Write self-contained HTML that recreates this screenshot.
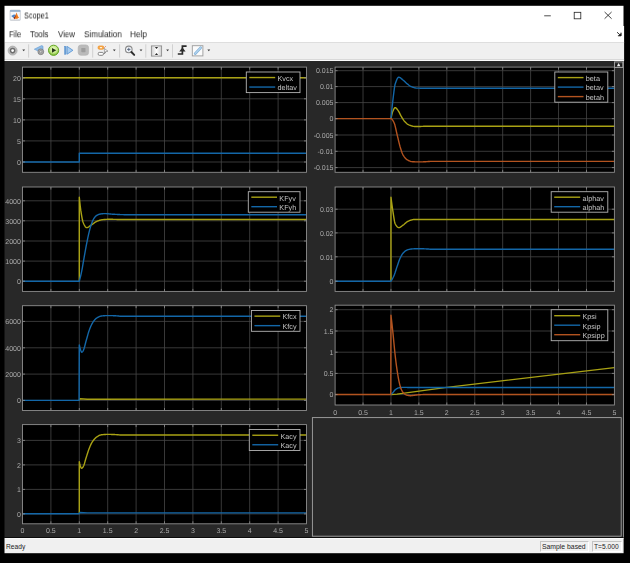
<!DOCTYPE html>
<html lang="en">
<head>
<meta charset="utf-8">
<title>Scope1</title>
<style>
html,body{margin:0;padding:0;background:#000;}
body{width:630px;height:563px;overflow:hidden;position:relative;font-family:"Liberation Sans",Arial,sans-serif;color:#111;}
.abs{position:absolute;}
#titlebar{left:4.5px;top:5.8px;width:619px;height:20.4px;background:#fff;}
#menubar{left:4.5px;top:26px;width:620px;height:16.4px;background:#fff;}
#toolbar{left:4.5px;top:42.4px;width:620px;height:17.4px;background:#f0f0f0;border-top:0.8px solid #d9d9d9;border-bottom:1px solid #fbfbfb;box-sizing:border-box;}
#scope{left:4.5px;top:59.8px;width:619px;height:478.4px;background:#262626;}
#status{left:4.5px;top:538.2px;width:619px;height:15px;background:#f0f0f0;}
.t{position:absolute;white-space:nowrap;transform-origin:0 50%;line-height:1;}
#title{left:24px;top:12px;font-size:9px;will-change:transform;color:#222;}
.menu{top:30px;font-size:8.4px;will-change:transform;color:#1e1e1e;}
.st{top:543.5px;font-size:6.8px;color:#1c1c1c;}
.sbox{position:absolute;top:541px;height:11px;border-left:0.8px solid #c4c4c4;border-top:0.8px solid #c4c4c4;border-right:0.8px solid #fff;border-bottom:0.8px solid #fff;box-sizing:border-box;}
svg.plots{position:absolute;left:0;top:0;will-change:transform;text-rendering:geometricPrecision;}
svg.ui{position:absolute;left:0;top:0;}
</style>
</head>
<body>
<svg class="ui" width="630" height="563" viewBox="0 0 630 563">
<rect x="4.5" y="5.8" width="619" height="20.2" fill="#fff"/>
<rect x="4.5" y="26" width="619.6" height="16" fill="#fff"/>
<rect x="4.5" y="42" width="619.6" height="17.6" fill="#f0f0f0"/>
<rect x="5" y="42" width="619.1" height="0.8" fill="#dadada"/>
<rect x="5" y="59" width="619.1" height="0.6" fill="#e2e2e2"/>
<rect x="4.5" y="59.6" width="619.6" height="1.4" fill="#fdfdfd"/>
<rect x="4.5" y="61" width="619.1" height="477" fill="#282828"/>
<rect x="623" y="61" width="1" height="477" fill="#8a8a8a"/>
<rect x="4.5" y="537" width="619.1" height="1" fill="#0c0c0c"/>
<rect x="4.5" y="538" width="619.1" height="15.2" fill="#f0f0f0"/>
<rect x="5" y="538" width="618.6" height="0.6" fill="#fff"/>
</svg>

<span class="t" id="title" style="transform:translateY(-0.5px) scaleX(0.810)">Scope1</span>
<span class="t menu" style="left:8.8px;transform:translateY(0.2px) scaleX(0.908)" id="m1">File</span>
<span class="t menu" style="left:30.2px;transform:translateY(0.2px) scaleX(0.948)" id="m2">Tools</span>
<span class="t menu" style="left:57.9px;transform:translateY(0.2px) scaleX(0.942)" id="m3">View</span>
<span class="t menu" style="left:84px;transform:translateY(0.2px) scaleX(0.964)" id="m4">Simulation</span>
<span class="t menu" style="left:130.2px;transform:translateY(0.2px) scaleX(0.985)" id="m5">Help</span>

<span class="t st" style="left:5.7px;transform:scaleX(0.977)" id="s1">Ready</span>
<div class="sbox" style="left:540.4px;width:49px"></div>
<div class="sbox" style="left:591.6px;width:30.4px"></div>
<span class="t st" style="left:542.4px;transform:scaleX(1.005)" id="s2">Sample based</span>
<span class="t st" style="left:594px;transform:scaleX(0.978)" id="s3">T=5.000</span>

<svg class="plots" width="630" height="563" viewBox="0 0 630 563" font-family="Liberation Sans, Arial, sans-serif" font-size="7.0">
<rect x="22.5" y="67.1" width="284" height="105.2" fill="#000"/>
<line x1="50.9" y1="67.1" x2="50.9" y2="172.3" stroke="#464646" stroke-width="0.8"/>
<line x1="79.3" y1="67.1" x2="79.3" y2="172.3" stroke="#464646" stroke-width="0.8"/>
<line x1="107.7" y1="67.1" x2="107.7" y2="172.3" stroke="#464646" stroke-width="0.8"/>
<line x1="136.1" y1="67.1" x2="136.1" y2="172.3" stroke="#464646" stroke-width="0.8"/>
<line x1="164.5" y1="67.1" x2="164.5" y2="172.3" stroke="#464646" stroke-width="0.8"/>
<line x1="192.9" y1="67.1" x2="192.9" y2="172.3" stroke="#464646" stroke-width="0.8"/>
<line x1="221.3" y1="67.1" x2="221.3" y2="172.3" stroke="#464646" stroke-width="0.8"/>
<line x1="249.7" y1="67.1" x2="249.7" y2="172.3" stroke="#464646" stroke-width="0.8"/>
<line x1="278.1" y1="67.1" x2="278.1" y2="172.3" stroke="#464646" stroke-width="0.8"/>
<line x1="22.5" y1="77.8" x2="306.5" y2="77.8" stroke="#464646" stroke-width="0.8"/>
<line x1="22.5" y1="98.8" x2="306.5" y2="98.8" stroke="#464646" stroke-width="0.8"/>
<line x1="22.5" y1="119.9" x2="306.5" y2="119.9" stroke="#464646" stroke-width="0.8"/>
<line x1="22.5" y1="140.9" x2="306.5" y2="140.9" stroke="#464646" stroke-width="0.8"/>
<line x1="22.5" y1="162" x2="306.5" y2="162" stroke="#464646" stroke-width="0.8"/>
<polyline points="22.5,77.8 306.5,77.8" fill="none" stroke="#a9a214" stroke-width="1.4" stroke-linejoin="round"/>
<polyline points="22.5,162 79.3,162 79.3,153.18 306.5,153.18" fill="none" stroke="#1367a8" stroke-width="1.4" stroke-linejoin="round"/>
<rect x="22.5" y="67.1" width="284" height="105.2" fill="none" stroke="#8e8e8e" stroke-width="0.9"/>
<line x1="50.9" y1="172.3" x2="50.9" y2="169.8" stroke="#8e8e8e" stroke-width="0.8"/>
<line x1="50.9" y1="67.1" x2="50.9" y2="69.6" stroke="#8e8e8e" stroke-width="0.8"/>
<line x1="79.3" y1="172.3" x2="79.3" y2="169.8" stroke="#8e8e8e" stroke-width="0.8"/>
<line x1="79.3" y1="67.1" x2="79.3" y2="69.6" stroke="#8e8e8e" stroke-width="0.8"/>
<line x1="107.7" y1="172.3" x2="107.7" y2="169.8" stroke="#8e8e8e" stroke-width="0.8"/>
<line x1="107.7" y1="67.1" x2="107.7" y2="69.6" stroke="#8e8e8e" stroke-width="0.8"/>
<line x1="136.1" y1="172.3" x2="136.1" y2="169.8" stroke="#8e8e8e" stroke-width="0.8"/>
<line x1="136.1" y1="67.1" x2="136.1" y2="69.6" stroke="#8e8e8e" stroke-width="0.8"/>
<line x1="164.5" y1="172.3" x2="164.5" y2="169.8" stroke="#8e8e8e" stroke-width="0.8"/>
<line x1="164.5" y1="67.1" x2="164.5" y2="69.6" stroke="#8e8e8e" stroke-width="0.8"/>
<line x1="192.9" y1="172.3" x2="192.9" y2="169.8" stroke="#8e8e8e" stroke-width="0.8"/>
<line x1="192.9" y1="67.1" x2="192.9" y2="69.6" stroke="#8e8e8e" stroke-width="0.8"/>
<line x1="221.3" y1="172.3" x2="221.3" y2="169.8" stroke="#8e8e8e" stroke-width="0.8"/>
<line x1="221.3" y1="67.1" x2="221.3" y2="69.6" stroke="#8e8e8e" stroke-width="0.8"/>
<line x1="249.7" y1="172.3" x2="249.7" y2="169.8" stroke="#8e8e8e" stroke-width="0.8"/>
<line x1="249.7" y1="67.1" x2="249.7" y2="69.6" stroke="#8e8e8e" stroke-width="0.8"/>
<line x1="278.1" y1="172.3" x2="278.1" y2="169.8" stroke="#8e8e8e" stroke-width="0.8"/>
<line x1="278.1" y1="67.1" x2="278.1" y2="69.6" stroke="#8e8e8e" stroke-width="0.8"/>
<line x1="22.5" y1="77.8" x2="25" y2="77.8" stroke="#8e8e8e" stroke-width="0.8"/>
<line x1="306.5" y1="77.8" x2="304" y2="77.8" stroke="#8e8e8e" stroke-width="0.8"/>
<text x="20.9" y="80.5" text-anchor="end" fill="#aaaaaa">20</text>
<line x1="22.5" y1="98.8" x2="25" y2="98.8" stroke="#8e8e8e" stroke-width="0.8"/>
<line x1="306.5" y1="98.8" x2="304" y2="98.8" stroke="#8e8e8e" stroke-width="0.8"/>
<text x="20.9" y="101.5" text-anchor="end" fill="#aaaaaa">15</text>
<line x1="22.5" y1="119.9" x2="25" y2="119.9" stroke="#8e8e8e" stroke-width="0.8"/>
<line x1="306.5" y1="119.9" x2="304" y2="119.9" stroke="#8e8e8e" stroke-width="0.8"/>
<text x="20.9" y="122.6" text-anchor="end" fill="#aaaaaa">10</text>
<line x1="22.5" y1="140.9" x2="25" y2="140.9" stroke="#8e8e8e" stroke-width="0.8"/>
<line x1="306.5" y1="140.9" x2="304" y2="140.9" stroke="#8e8e8e" stroke-width="0.8"/>
<text x="20.9" y="143.6" text-anchor="end" fill="#aaaaaa">5</text>
<line x1="22.5" y1="162" x2="25" y2="162" stroke="#8e8e8e" stroke-width="0.8"/>
<line x1="306.5" y1="162" x2="304" y2="162" stroke="#8e8e8e" stroke-width="0.8"/>
<text x="20.9" y="164.7" text-anchor="end" fill="#aaaaaa">0</text>
<rect x="246.3" y="72" width="53.7" height="20.6" fill="#000" stroke="#b4b4b4" stroke-width="0.9"/>
<line x1="249.3" y1="77.55" x2="275.2" y2="77.55" stroke="#a9a214" stroke-width="1.4"/>
<text x="277.5" y="80.85" fill="#c4c4c4" font-size="7.25">Kvcx</text>
<line x1="249.3" y1="87.05" x2="275.2" y2="87.05" stroke="#1367a8" stroke-width="1.4"/>
<text x="277.5" y="90.35" fill="#c4c4c4" font-size="7.25">deltav</text>
<rect x="335.1" y="67.1" width="279.3" height="105.2" fill="#000"/>
<line x1="363.03" y1="67.1" x2="363.03" y2="172.3" stroke="#464646" stroke-width="0.8"/>
<line x1="390.96" y1="67.1" x2="390.96" y2="172.3" stroke="#464646" stroke-width="0.8"/>
<line x1="418.89" y1="67.1" x2="418.89" y2="172.3" stroke="#464646" stroke-width="0.8"/>
<line x1="446.82" y1="67.1" x2="446.82" y2="172.3" stroke="#464646" stroke-width="0.8"/>
<line x1="474.75" y1="67.1" x2="474.75" y2="172.3" stroke="#464646" stroke-width="0.8"/>
<line x1="502.68" y1="67.1" x2="502.68" y2="172.3" stroke="#464646" stroke-width="0.8"/>
<line x1="530.61" y1="67.1" x2="530.61" y2="172.3" stroke="#464646" stroke-width="0.8"/>
<line x1="558.54" y1="67.1" x2="558.54" y2="172.3" stroke="#464646" stroke-width="0.8"/>
<line x1="586.47" y1="67.1" x2="586.47" y2="172.3" stroke="#464646" stroke-width="0.8"/>
<line x1="335.1" y1="70.7" x2="614.4" y2="70.7" stroke="#464646" stroke-width="0.8"/>
<line x1="335.1" y1="86.6" x2="614.4" y2="86.6" stroke="#464646" stroke-width="0.8"/>
<line x1="335.1" y1="102.6" x2="614.4" y2="102.6" stroke="#464646" stroke-width="0.8"/>
<line x1="335.1" y1="118.7" x2="614.4" y2="118.7" stroke="#464646" stroke-width="0.8"/>
<line x1="335.1" y1="135" x2="614.4" y2="135" stroke="#464646" stroke-width="0.8"/>
<line x1="335.1" y1="151.3" x2="614.4" y2="151.3" stroke="#464646" stroke-width="0.8"/>
<line x1="335.1" y1="167.6" x2="614.4" y2="167.6" stroke="#464646" stroke-width="0.8"/>
<polyline points="390.96,118.7 390.96,118.7 391.46,116.28 391.96,114.12 392.46,112.36 392.96,111.06 393.46,109.86 393.96,108.8 394.46,108.01 394.96,107.62 395.46,107.67 395.96,107.96 396.46,108.43 396.96,109.03 397.46,109.69 397.96,110.38 398.46,111.07 398.96,111.91 399.46,112.88 399.96,113.91 400.46,114.94 400.96,115.89 401.46,116.73 401.96,117.55 402.46,118.36 402.96,119.15 403.46,119.91 403.96,120.62 404.46,121.27 404.96,121.85 405.46,122.35 405.96,122.82 406.46,123.27 406.96,123.69 407.46,124.07 407.96,124.41 408.46,124.71 408.96,124.96 409.46,125.16 409.96,125.34 410.46,125.51 410.96,125.67 411.46,125.83 411.96,125.97 412.46,126.1 412.96,126.22 413.46,126.32 413.96,126.4 414.46,126.45 414.96,126.49 415.46,126.5 415.96,126.5 416.46,126.5 416.96,126.5 417.46,126.5 417.96,126.49 418.46,126.49 418.96,126.48 419.46,126.48 419.96,126.47 420.46,126.46 420.96,126.44 421.46,126.42 421.96,126.4 422.46,126.38 422.96,126.35 423.46,126.32 423.96,126.29 424.46,126.25 424.96,126.2 425,126.2 614.4,126.2" fill="none" stroke="#a9a214" stroke-width="1.4" stroke-linejoin="round"/>
<polyline points="390.96,118.7 390.96,118.7 391.46,113.5 391.96,108.58 392.46,103.96 392.96,99.65 393.46,95.5 393.96,91.3 394.46,87.55 394.96,84.81 395.46,83.17 395.96,81.7 396.46,80.38 396.96,79.25 397.46,78.33 397.96,77.66 398.46,77.28 398.96,77.21 399.46,77.32 399.96,77.54 400.46,77.86 400.96,78.24 401.46,78.67 401.96,79.12 402.46,79.58 402.96,80.01 403.46,80.41 403.96,80.84 404.46,81.3 404.96,81.77 405.46,82.25 405.96,82.73 406.46,83.19 406.96,83.63 407.46,84.03 407.96,84.42 408.46,84.82 408.96,85.22 409.46,85.59 409.96,85.94 410.46,86.25 410.96,86.51 411.46,86.72 411.96,86.9 412.46,87.08 412.96,87.25 413.46,87.42 413.96,87.57 414.46,87.71 414.96,87.83 415.46,87.94 415.96,88.03 416.46,88.09 416.96,88.13 417.46,88.15 417.96,88.16 418.46,88.16 418.96,88.17 419.46,88.17 419.96,88.18 420.46,88.18 420.96,88.19 421.46,88.19 421.96,88.19 422.46,88.19 422.96,88.2 423.46,88.2 423.96,88.2 424.46,88.2 424.96,88.2 425,88.2 614.4,88.2" fill="none" stroke="#1367a8" stroke-width="1.4" stroke-linejoin="round"/>
<polyline points="335.1,118.6 390.96,118.6 390.96,118.6 391.46,118.76 391.96,119.19 392.46,119.82 392.96,120.62 393.46,121.54 393.96,122.52 394.46,123.67 394.96,125.31 395.46,127.31 395.96,129.52 396.46,131.81 396.96,134.01 397.46,136.05 397.96,138.16 398.46,140.31 398.96,142.42 399.46,144.44 399.96,146.29 400.46,147.94 400.96,149.53 401.46,151.05 401.96,152.46 402.46,153.72 402.96,154.78 403.46,155.62 403.96,156.39 404.46,157.1 404.96,157.76 405.46,158.35 405.96,158.87 406.46,159.32 406.96,159.69 407.46,159.99 407.96,160.25 408.46,160.5 408.96,160.74 409.46,160.95 409.96,161.15 410.46,161.32 410.96,161.46 411.46,161.57 411.96,161.65 412.46,161.7 412.96,161.74 413.46,161.77 413.96,161.8 414.46,161.82 414.96,161.85 415.46,161.87 415.96,161.88 416.46,161.89 416.96,161.9 417.46,161.9 417.96,161.9 418.46,161.9 418.96,161.9 419.46,161.89 419.96,161.89 420.46,161.88 420.96,161.87 421.46,161.86 421.96,161.85 422.46,161.84 422.96,161.83 423.46,161.81 423.96,161.79 424.46,161.77 424.96,161.75 425.46,161.73 425.96,161.7 426.46,161.67 426.96,161.64 427.46,161.61 427.96,161.57 428.46,161.54 428.96,161.49 429.46,161.45 429.96,161.4 430,161.4 614.4,161.4" fill="none" stroke="#b3531f" stroke-width="1.4" stroke-linejoin="round"/>
<rect x="335.1" y="67.1" width="279.3" height="105.2" fill="none" stroke="#8e8e8e" stroke-width="0.9"/>
<line x1="363.03" y1="172.3" x2="363.03" y2="169.8" stroke="#8e8e8e" stroke-width="0.8"/>
<line x1="363.03" y1="67.1" x2="363.03" y2="69.6" stroke="#8e8e8e" stroke-width="0.8"/>
<line x1="390.96" y1="172.3" x2="390.96" y2="169.8" stroke="#8e8e8e" stroke-width="0.8"/>
<line x1="390.96" y1="67.1" x2="390.96" y2="69.6" stroke="#8e8e8e" stroke-width="0.8"/>
<line x1="418.89" y1="172.3" x2="418.89" y2="169.8" stroke="#8e8e8e" stroke-width="0.8"/>
<line x1="418.89" y1="67.1" x2="418.89" y2="69.6" stroke="#8e8e8e" stroke-width="0.8"/>
<line x1="446.82" y1="172.3" x2="446.82" y2="169.8" stroke="#8e8e8e" stroke-width="0.8"/>
<line x1="446.82" y1="67.1" x2="446.82" y2="69.6" stroke="#8e8e8e" stroke-width="0.8"/>
<line x1="474.75" y1="172.3" x2="474.75" y2="169.8" stroke="#8e8e8e" stroke-width="0.8"/>
<line x1="474.75" y1="67.1" x2="474.75" y2="69.6" stroke="#8e8e8e" stroke-width="0.8"/>
<line x1="502.68" y1="172.3" x2="502.68" y2="169.8" stroke="#8e8e8e" stroke-width="0.8"/>
<line x1="502.68" y1="67.1" x2="502.68" y2="69.6" stroke="#8e8e8e" stroke-width="0.8"/>
<line x1="530.61" y1="172.3" x2="530.61" y2="169.8" stroke="#8e8e8e" stroke-width="0.8"/>
<line x1="530.61" y1="67.1" x2="530.61" y2="69.6" stroke="#8e8e8e" stroke-width="0.8"/>
<line x1="558.54" y1="172.3" x2="558.54" y2="169.8" stroke="#8e8e8e" stroke-width="0.8"/>
<line x1="558.54" y1="67.1" x2="558.54" y2="69.6" stroke="#8e8e8e" stroke-width="0.8"/>
<line x1="586.47" y1="172.3" x2="586.47" y2="169.8" stroke="#8e8e8e" stroke-width="0.8"/>
<line x1="586.47" y1="67.1" x2="586.47" y2="69.6" stroke="#8e8e8e" stroke-width="0.8"/>
<line x1="335.1" y1="70.7" x2="337.6" y2="70.7" stroke="#8e8e8e" stroke-width="0.8"/>
<line x1="614.4" y1="70.7" x2="611.9" y2="70.7" stroke="#8e8e8e" stroke-width="0.8"/>
<text x="333.5" y="73.4" text-anchor="end" fill="#aaaaaa">0.015</text>
<line x1="335.1" y1="86.6" x2="337.6" y2="86.6" stroke="#8e8e8e" stroke-width="0.8"/>
<line x1="614.4" y1="86.6" x2="611.9" y2="86.6" stroke="#8e8e8e" stroke-width="0.8"/>
<text x="333.5" y="89.3" text-anchor="end" fill="#aaaaaa">0.01</text>
<line x1="335.1" y1="102.6" x2="337.6" y2="102.6" stroke="#8e8e8e" stroke-width="0.8"/>
<line x1="614.4" y1="102.6" x2="611.9" y2="102.6" stroke="#8e8e8e" stroke-width="0.8"/>
<text x="333.5" y="105.3" text-anchor="end" fill="#aaaaaa">0.005</text>
<line x1="335.1" y1="118.7" x2="337.6" y2="118.7" stroke="#8e8e8e" stroke-width="0.8"/>
<line x1="614.4" y1="118.7" x2="611.9" y2="118.7" stroke="#8e8e8e" stroke-width="0.8"/>
<text x="333.5" y="121.4" text-anchor="end" fill="#aaaaaa">0</text>
<line x1="335.1" y1="135" x2="337.6" y2="135" stroke="#8e8e8e" stroke-width="0.8"/>
<line x1="614.4" y1="135" x2="611.9" y2="135" stroke="#8e8e8e" stroke-width="0.8"/>
<text x="333.5" y="137.7" text-anchor="end" fill="#aaaaaa">-0.005</text>
<line x1="335.1" y1="151.3" x2="337.6" y2="151.3" stroke="#8e8e8e" stroke-width="0.8"/>
<line x1="614.4" y1="151.3" x2="611.9" y2="151.3" stroke="#8e8e8e" stroke-width="0.8"/>
<text x="333.5" y="154" text-anchor="end" fill="#aaaaaa">-0.01</text>
<line x1="335.1" y1="167.6" x2="337.6" y2="167.6" stroke="#8e8e8e" stroke-width="0.8"/>
<line x1="614.4" y1="167.6" x2="611.9" y2="167.6" stroke="#8e8e8e" stroke-width="0.8"/>
<text x="333.5" y="170.3" text-anchor="end" fill="#aaaaaa">-0.015</text>
<rect x="554.8" y="72" width="53" height="30.2" fill="#000" stroke="#b4b4b4" stroke-width="0.9"/>
<line x1="557.8" y1="77.6" x2="583.5" y2="77.6" stroke="#a9a214" stroke-width="1.4"/>
<text x="585.8" y="80.9" fill="#c4c4c4" font-size="7.25">beta</text>
<line x1="557.8" y1="87.1" x2="583.5" y2="87.1" stroke="#1367a8" stroke-width="1.4"/>
<text x="585.8" y="90.4" fill="#c4c4c4" font-size="7.25">betav</text>
<line x1="557.8" y1="96.6" x2="583.5" y2="96.6" stroke="#b3531f" stroke-width="1.4"/>
<text x="585.8" y="99.9" fill="#c4c4c4" font-size="7.25">betah</text>
<rect x="22.5" y="187" width="284" height="104.4" fill="#000"/>
<line x1="50.9" y1="187" x2="50.9" y2="291.4" stroke="#464646" stroke-width="0.8"/>
<line x1="79.3" y1="187" x2="79.3" y2="291.4" stroke="#464646" stroke-width="0.8"/>
<line x1="107.7" y1="187" x2="107.7" y2="291.4" stroke="#464646" stroke-width="0.8"/>
<line x1="136.1" y1="187" x2="136.1" y2="291.4" stroke="#464646" stroke-width="0.8"/>
<line x1="164.5" y1="187" x2="164.5" y2="291.4" stroke="#464646" stroke-width="0.8"/>
<line x1="192.9" y1="187" x2="192.9" y2="291.4" stroke="#464646" stroke-width="0.8"/>
<line x1="221.3" y1="187" x2="221.3" y2="291.4" stroke="#464646" stroke-width="0.8"/>
<line x1="249.7" y1="187" x2="249.7" y2="291.4" stroke="#464646" stroke-width="0.8"/>
<line x1="278.1" y1="187" x2="278.1" y2="291.4" stroke="#464646" stroke-width="0.8"/>
<line x1="22.5" y1="200.8" x2="306.5" y2="200.8" stroke="#464646" stroke-width="0.8"/>
<line x1="22.5" y1="220.8" x2="306.5" y2="220.8" stroke="#464646" stroke-width="0.8"/>
<line x1="22.5" y1="241" x2="306.5" y2="241" stroke="#464646" stroke-width="0.8"/>
<line x1="22.5" y1="261.1" x2="306.5" y2="261.1" stroke="#464646" stroke-width="0.8"/>
<line x1="22.5" y1="281.2" x2="306.5" y2="281.2" stroke="#464646" stroke-width="0.8"/>
<polyline points="79.3,281.2 79.3,197.2 79.3,197.2 79.8,202.08 80.3,206.52 80.8,210.4 81.3,213.64 81.8,216.61 82.3,219.26 82.8,221.4 83.3,222.83 83.8,223.97 84.3,225.02 84.8,225.94 85.3,226.69 85.8,227.24 86.3,227.55 86.8,227.59 87.3,227.5 87.8,227.32 88.3,227.06 88.8,226.76 89.3,226.41 89.8,226.05 90.3,225.68 90.8,225.33 91.3,225 91.8,224.68 92.3,224.33 92.8,223.95 93.3,223.57 93.8,223.19 94.3,222.82 94.8,222.46 95.3,222.13 95.8,221.84 96.3,221.6 96.8,221.39 97.3,221.18 97.8,220.97 98.3,220.78 98.8,220.59 99.3,220.42 99.8,220.26 100.3,220.11 100.8,219.98 101.3,219.87 101.8,219.78 102.3,219.71 102.8,219.66 103.3,219.61 103.8,219.56 104.3,219.51 104.8,219.47 105.3,219.43 105.8,219.39 106.3,219.36 106.8,219.34 107.3,219.32 107.8,219.31 108.3,219.3 108.8,219.3 109.3,219.3 109.8,219.3 110.3,219.3 110.8,219.3 111.3,219.31 111.8,219.31 112.3,219.31 112.8,219.32 113.3,219.33 113.8,219.33 114.3,219.35 114.8,219.36 115.3,219.37 115.8,219.39 116.3,219.41 116.8,219.43 117.3,219.46 117.8,219.49 118,219.5 306.5,219.5" fill="none" stroke="#a9a214" stroke-width="1.4" stroke-linejoin="round"/>
<polyline points="22.5,281.2 79.3,281.2 79.3,281.2 79.8,279.4 80.3,277.44 80.8,275.33 81.3,273.08 81.8,270.71 82.3,268.08 82.8,265.22 83.3,262.24 83.8,259.28 84.3,256.44 84.8,253.64 85.3,250.84 85.8,248.06 86.3,245.35 86.8,242.76 87.3,240.32 87.8,237.96 88.3,235.64 88.8,233.41 89.3,231.31 89.8,229.36 90.3,227.6 90.8,225.97 91.3,224.42 91.8,222.96 92.3,221.63 92.8,220.47 93.3,219.5 93.8,218.66 94.3,217.89 94.8,217.19 95.3,216.59 95.8,216.08 96.3,215.7 96.8,215.39 97.3,215.11 97.8,214.85 98.3,214.62 98.8,214.42 99.3,214.26 99.8,214.12 100.3,214.02 100.8,213.94 101.3,213.86 101.8,213.8 102.3,213.74 102.8,213.68 103.3,213.64 103.8,213.62 104.3,213.6 104.8,213.6 105.3,213.61 105.8,213.63 106.3,213.66 106.8,213.69 107.3,213.73 107.8,213.77 108.3,213.82 108.8,213.87 109.3,213.92 109.8,213.97 110.3,214.02 110.8,214.07 111.3,214.11 111.8,214.15 112.3,214.18 112.8,214.21 113.3,214.24 113.8,214.26 114.3,214.29 114.8,214.32 115.3,214.34 115.8,214.37 116.3,214.4 116.8,214.42 117.3,214.45 117.8,214.47 118.3,214.49 118.8,214.52 119.3,214.54 119.8,214.56 120.3,214.58 120.8,214.6 121.3,214.61 121.8,214.63 122.3,214.65 122.8,214.66 123.3,214.67 123.8,214.68 124.3,214.69 124.8,214.7 125.3,214.71 125.8,214.72 126.3,214.72 126.8,214.73 127.3,214.74 127.8,214.75 128.3,214.75 128.8,214.76 129.3,214.76 129.8,214.77 130.3,214.77 130.8,214.78 131.3,214.78 131.8,214.79 132.3,214.79 132.8,214.79 133.3,214.8 133.8,214.8 134.3,214.8 134.8,214.8 135,214.8 306.5,214.8" fill="none" stroke="#1367a8" stroke-width="1.4" stroke-linejoin="round"/>
<rect x="22.5" y="187" width="284" height="104.4" fill="none" stroke="#8e8e8e" stroke-width="0.9"/>
<line x1="50.9" y1="291.4" x2="50.9" y2="288.9" stroke="#8e8e8e" stroke-width="0.8"/>
<line x1="50.9" y1="187" x2="50.9" y2="189.5" stroke="#8e8e8e" stroke-width="0.8"/>
<line x1="79.3" y1="291.4" x2="79.3" y2="288.9" stroke="#8e8e8e" stroke-width="0.8"/>
<line x1="79.3" y1="187" x2="79.3" y2="189.5" stroke="#8e8e8e" stroke-width="0.8"/>
<line x1="107.7" y1="291.4" x2="107.7" y2="288.9" stroke="#8e8e8e" stroke-width="0.8"/>
<line x1="107.7" y1="187" x2="107.7" y2="189.5" stroke="#8e8e8e" stroke-width="0.8"/>
<line x1="136.1" y1="291.4" x2="136.1" y2="288.9" stroke="#8e8e8e" stroke-width="0.8"/>
<line x1="136.1" y1="187" x2="136.1" y2="189.5" stroke="#8e8e8e" stroke-width="0.8"/>
<line x1="164.5" y1="291.4" x2="164.5" y2="288.9" stroke="#8e8e8e" stroke-width="0.8"/>
<line x1="164.5" y1="187" x2="164.5" y2="189.5" stroke="#8e8e8e" stroke-width="0.8"/>
<line x1="192.9" y1="291.4" x2="192.9" y2="288.9" stroke="#8e8e8e" stroke-width="0.8"/>
<line x1="192.9" y1="187" x2="192.9" y2="189.5" stroke="#8e8e8e" stroke-width="0.8"/>
<line x1="221.3" y1="291.4" x2="221.3" y2="288.9" stroke="#8e8e8e" stroke-width="0.8"/>
<line x1="221.3" y1="187" x2="221.3" y2="189.5" stroke="#8e8e8e" stroke-width="0.8"/>
<line x1="249.7" y1="291.4" x2="249.7" y2="288.9" stroke="#8e8e8e" stroke-width="0.8"/>
<line x1="249.7" y1="187" x2="249.7" y2="189.5" stroke="#8e8e8e" stroke-width="0.8"/>
<line x1="278.1" y1="291.4" x2="278.1" y2="288.9" stroke="#8e8e8e" stroke-width="0.8"/>
<line x1="278.1" y1="187" x2="278.1" y2="189.5" stroke="#8e8e8e" stroke-width="0.8"/>
<line x1="22.5" y1="200.8" x2="25" y2="200.8" stroke="#8e8e8e" stroke-width="0.8"/>
<line x1="306.5" y1="200.8" x2="304" y2="200.8" stroke="#8e8e8e" stroke-width="0.8"/>
<text x="20.9" y="203.5" text-anchor="end" fill="#aaaaaa">4000</text>
<line x1="22.5" y1="220.8" x2="25" y2="220.8" stroke="#8e8e8e" stroke-width="0.8"/>
<line x1="306.5" y1="220.8" x2="304" y2="220.8" stroke="#8e8e8e" stroke-width="0.8"/>
<text x="20.9" y="223.5" text-anchor="end" fill="#aaaaaa">3000</text>
<line x1="22.5" y1="241" x2="25" y2="241" stroke="#8e8e8e" stroke-width="0.8"/>
<line x1="306.5" y1="241" x2="304" y2="241" stroke="#8e8e8e" stroke-width="0.8"/>
<text x="20.9" y="243.7" text-anchor="end" fill="#aaaaaa">2000</text>
<line x1="22.5" y1="261.1" x2="25" y2="261.1" stroke="#8e8e8e" stroke-width="0.8"/>
<line x1="306.5" y1="261.1" x2="304" y2="261.1" stroke="#8e8e8e" stroke-width="0.8"/>
<text x="20.9" y="263.8" text-anchor="end" fill="#aaaaaa">1000</text>
<line x1="22.5" y1="281.2" x2="25" y2="281.2" stroke="#8e8e8e" stroke-width="0.8"/>
<line x1="306.5" y1="281.2" x2="304" y2="281.2" stroke="#8e8e8e" stroke-width="0.8"/>
<text x="20.9" y="283.9" text-anchor="end" fill="#aaaaaa">0</text>
<rect x="248.3" y="191.7" width="51.7" height="20.5" fill="#000" stroke="#b4b4b4" stroke-width="0.9"/>
<line x1="251.3" y1="197.2" x2="277" y2="197.2" stroke="#a9a214" stroke-width="1.4"/>
<text x="279.3" y="200.5" fill="#c4c4c4" font-size="7.25">KFyv</text>
<line x1="251.3" y1="206.7" x2="277" y2="206.7" stroke="#1367a8" stroke-width="1.4"/>
<text x="279.3" y="210" fill="#c4c4c4" font-size="7.25">KFyh</text>
<rect x="335.1" y="187" width="279.3" height="104.4" fill="#000"/>
<line x1="363.03" y1="187" x2="363.03" y2="291.4" stroke="#464646" stroke-width="0.8"/>
<line x1="390.96" y1="187" x2="390.96" y2="291.4" stroke="#464646" stroke-width="0.8"/>
<line x1="418.89" y1="187" x2="418.89" y2="291.4" stroke="#464646" stroke-width="0.8"/>
<line x1="446.82" y1="187" x2="446.82" y2="291.4" stroke="#464646" stroke-width="0.8"/>
<line x1="474.75" y1="187" x2="474.75" y2="291.4" stroke="#464646" stroke-width="0.8"/>
<line x1="502.68" y1="187" x2="502.68" y2="291.4" stroke="#464646" stroke-width="0.8"/>
<line x1="530.61" y1="187" x2="530.61" y2="291.4" stroke="#464646" stroke-width="0.8"/>
<line x1="558.54" y1="187" x2="558.54" y2="291.4" stroke="#464646" stroke-width="0.8"/>
<line x1="586.47" y1="187" x2="586.47" y2="291.4" stroke="#464646" stroke-width="0.8"/>
<line x1="335.1" y1="209.2" x2="614.4" y2="209.2" stroke="#464646" stroke-width="0.8"/>
<line x1="335.1" y1="232.9" x2="614.4" y2="232.9" stroke="#464646" stroke-width="0.8"/>
<line x1="335.1" y1="256.8" x2="614.4" y2="256.8" stroke="#464646" stroke-width="0.8"/>
<line x1="335.1" y1="281.2" x2="614.4" y2="281.2" stroke="#464646" stroke-width="0.8"/>
<polyline points="390.96,281.2 390.96,197.2 390.96,197.2 391.46,201.06 391.96,204.73 392.46,208.23 392.96,211.52 393.46,214.77 393.96,218.17 394.46,221.19 394.96,223.26 395.46,224.28 395.96,225.13 396.46,225.88 396.96,226.51 397.46,227.01 397.96,227.36 398.46,227.56 398.96,227.59 399.46,227.5 399.96,227.3 400.46,227.03 400.96,226.69 401.46,226.32 401.96,225.93 402.46,225.54 402.96,225.16 403.46,224.82 403.96,224.44 404.46,224.02 404.96,223.58 405.46,223.14 405.96,222.7 406.46,222.27 406.96,221.88 407.46,221.54 407.96,221.25 408.46,221.04 408.96,220.84 409.46,220.65 409.96,220.46 410.46,220.28 410.96,220.12 411.46,219.97 411.96,219.83 412.46,219.72 412.96,219.62 413.46,219.55 413.96,219.51 414.46,219.5 414.96,219.5 415.46,219.5 415.96,219.5 416.46,219.5 416.96,219.5 417.46,219.5 417.96,219.5 418.46,219.5 418.96,219.5 419.46,219.5 419.96,219.5 420.46,219.5 420.96,219.5 421.46,219.5 421.96,219.5 422.46,219.5 422.96,219.5 423.46,219.5 423.96,219.5 424.46,219.5 424.96,219.5 425,219.5 614.4,219.5" fill="none" stroke="#a9a214" stroke-width="1.4" stroke-linejoin="round"/>
<polyline points="335.1,281.2 390.96,281.2 390.96,281.2 391.46,280.48 391.96,279.66 392.46,278.75 392.96,277.77 393.46,276.73 393.96,275.62 394.46,274.42 394.96,273.05 395.46,271.55 395.96,269.98 396.46,268.41 396.96,266.89 397.46,265.45 397.96,263.99 398.46,262.51 398.96,261.08 399.46,259.73 399.96,258.52 400.46,257.47 400.96,256.48 401.46,255.54 401.96,254.69 402.46,253.92 402.96,253.27 403.46,252.73 403.96,252.22 404.46,251.75 404.96,251.31 405.46,250.91 405.96,250.56 406.46,250.26 406.96,250.02 407.46,249.85 407.96,249.7 408.46,249.56 408.96,249.43 409.46,249.32 409.96,249.22 410.46,249.13 410.96,249.05 411.46,248.99 411.96,248.93 412.46,248.9 412.96,248.86 413.46,248.83 413.96,248.8 414.46,248.78 414.96,248.76 415.46,248.74 415.96,248.72 416.46,248.71 416.96,248.7 417.46,248.7 417.96,248.7 418.46,248.7 418.96,248.7 419.46,248.71 419.96,248.71 420.46,248.72 420.96,248.73 421.46,248.74 421.96,248.75 422.46,248.76 422.96,248.77 423.46,248.79 423.96,248.81 424.46,248.83 424.96,248.85 425.46,248.87 425.96,248.9 426.46,248.93 426.96,248.96 427.46,248.99 427.96,249.03 428.46,249.06 428.96,249.11 429.46,249.15 429.96,249.2 430,249.2 614.4,249.2" fill="none" stroke="#1367a8" stroke-width="1.4" stroke-linejoin="round"/>
<rect x="335.1" y="187" width="279.3" height="104.4" fill="none" stroke="#8e8e8e" stroke-width="0.9"/>
<line x1="363.03" y1="291.4" x2="363.03" y2="288.9" stroke="#8e8e8e" stroke-width="0.8"/>
<line x1="363.03" y1="187" x2="363.03" y2="189.5" stroke="#8e8e8e" stroke-width="0.8"/>
<line x1="390.96" y1="291.4" x2="390.96" y2="288.9" stroke="#8e8e8e" stroke-width="0.8"/>
<line x1="390.96" y1="187" x2="390.96" y2="189.5" stroke="#8e8e8e" stroke-width="0.8"/>
<line x1="418.89" y1="291.4" x2="418.89" y2="288.9" stroke="#8e8e8e" stroke-width="0.8"/>
<line x1="418.89" y1="187" x2="418.89" y2="189.5" stroke="#8e8e8e" stroke-width="0.8"/>
<line x1="446.82" y1="291.4" x2="446.82" y2="288.9" stroke="#8e8e8e" stroke-width="0.8"/>
<line x1="446.82" y1="187" x2="446.82" y2="189.5" stroke="#8e8e8e" stroke-width="0.8"/>
<line x1="474.75" y1="291.4" x2="474.75" y2="288.9" stroke="#8e8e8e" stroke-width="0.8"/>
<line x1="474.75" y1="187" x2="474.75" y2="189.5" stroke="#8e8e8e" stroke-width="0.8"/>
<line x1="502.68" y1="291.4" x2="502.68" y2="288.9" stroke="#8e8e8e" stroke-width="0.8"/>
<line x1="502.68" y1="187" x2="502.68" y2="189.5" stroke="#8e8e8e" stroke-width="0.8"/>
<line x1="530.61" y1="291.4" x2="530.61" y2="288.9" stroke="#8e8e8e" stroke-width="0.8"/>
<line x1="530.61" y1="187" x2="530.61" y2="189.5" stroke="#8e8e8e" stroke-width="0.8"/>
<line x1="558.54" y1="291.4" x2="558.54" y2="288.9" stroke="#8e8e8e" stroke-width="0.8"/>
<line x1="558.54" y1="187" x2="558.54" y2="189.5" stroke="#8e8e8e" stroke-width="0.8"/>
<line x1="586.47" y1="291.4" x2="586.47" y2="288.9" stroke="#8e8e8e" stroke-width="0.8"/>
<line x1="586.47" y1="187" x2="586.47" y2="189.5" stroke="#8e8e8e" stroke-width="0.8"/>
<line x1="335.1" y1="209.2" x2="337.6" y2="209.2" stroke="#8e8e8e" stroke-width="0.8"/>
<line x1="614.4" y1="209.2" x2="611.9" y2="209.2" stroke="#8e8e8e" stroke-width="0.8"/>
<text x="333.5" y="211.9" text-anchor="end" fill="#aaaaaa">0.03</text>
<line x1="335.1" y1="232.9" x2="337.6" y2="232.9" stroke="#8e8e8e" stroke-width="0.8"/>
<line x1="614.4" y1="232.9" x2="611.9" y2="232.9" stroke="#8e8e8e" stroke-width="0.8"/>
<text x="333.5" y="235.6" text-anchor="end" fill="#aaaaaa">0.02</text>
<line x1="335.1" y1="256.8" x2="337.6" y2="256.8" stroke="#8e8e8e" stroke-width="0.8"/>
<line x1="614.4" y1="256.8" x2="611.9" y2="256.8" stroke="#8e8e8e" stroke-width="0.8"/>
<text x="333.5" y="259.5" text-anchor="end" fill="#aaaaaa">0.01</text>
<line x1="335.1" y1="281.2" x2="337.6" y2="281.2" stroke="#8e8e8e" stroke-width="0.8"/>
<line x1="614.4" y1="281.2" x2="611.9" y2="281.2" stroke="#8e8e8e" stroke-width="0.8"/>
<text x="333.5" y="283.9" text-anchor="end" fill="#aaaaaa">0</text>
<rect x="551.2" y="191.7" width="56.6" height="20.5" fill="#000" stroke="#b4b4b4" stroke-width="0.9"/>
<line x1="554.2" y1="197.2" x2="580.2" y2="197.2" stroke="#a9a214" stroke-width="1.4"/>
<text x="582.5" y="200.5" fill="#c4c4c4" font-size="7.25">alphav</text>
<line x1="554.2" y1="206.7" x2="580.2" y2="206.7" stroke="#1367a8" stroke-width="1.4"/>
<text x="582.5" y="210" fill="#c4c4c4" font-size="7.25">alphah</text>
<rect x="22.5" y="305.7" width="284" height="104.8" fill="#000"/>
<line x1="50.9" y1="305.7" x2="50.9" y2="410.5" stroke="#464646" stroke-width="0.8"/>
<line x1="79.3" y1="305.7" x2="79.3" y2="410.5" stroke="#464646" stroke-width="0.8"/>
<line x1="107.7" y1="305.7" x2="107.7" y2="410.5" stroke="#464646" stroke-width="0.8"/>
<line x1="136.1" y1="305.7" x2="136.1" y2="410.5" stroke="#464646" stroke-width="0.8"/>
<line x1="164.5" y1="305.7" x2="164.5" y2="410.5" stroke="#464646" stroke-width="0.8"/>
<line x1="192.9" y1="305.7" x2="192.9" y2="410.5" stroke="#464646" stroke-width="0.8"/>
<line x1="221.3" y1="305.7" x2="221.3" y2="410.5" stroke="#464646" stroke-width="0.8"/>
<line x1="249.7" y1="305.7" x2="249.7" y2="410.5" stroke="#464646" stroke-width="0.8"/>
<line x1="278.1" y1="305.7" x2="278.1" y2="410.5" stroke="#464646" stroke-width="0.8"/>
<line x1="22.5" y1="321.4" x2="306.5" y2="321.4" stroke="#464646" stroke-width="0.8"/>
<line x1="22.5" y1="347.8" x2="306.5" y2="347.8" stroke="#464646" stroke-width="0.8"/>
<line x1="22.5" y1="374.1" x2="306.5" y2="374.1" stroke="#464646" stroke-width="0.8"/>
<line x1="22.5" y1="400.4" x2="306.5" y2="400.4" stroke="#464646" stroke-width="0.8"/>
<polyline points="79.3,400.2 79.8,398.8 87.3,399.3 306.5,399.1" fill="none" stroke="#a9a214" stroke-width="1.4" stroke-linejoin="round"/>
<polyline points="22.5,400.4 79.1,400.4 79.3,345 79.3,345 79.8,347.24 80.3,349.1 80.8,350.58 81.3,351.87 81.8,352.29 82.3,351.96 82.8,351.31 83.3,350.53 83.8,349.39 84.3,347.81 84.8,345.96 85.3,343.98 85.8,342.04 86.3,340.26 86.8,338.5 87.3,336.7 87.8,334.9 88.3,333.17 88.8,331.56 89.3,330.13 89.8,328.79 90.3,327.51 90.8,326.31 91.3,325.19 91.8,324.19 92.3,323.3 92.8,322.5 93.3,321.72 93.8,321 94.3,320.32 94.8,319.7 95.3,319.15 95.8,318.68 96.3,318.3 96.8,317.97 97.3,317.65 97.8,317.35 98.3,317.07 98.8,316.82 99.3,316.59 99.8,316.39 100.3,316.23 100.8,316.1 101.3,316.01 101.8,315.95 102.3,315.9 102.8,315.85 103.3,315.8 103.8,315.76 104.3,315.72 104.8,315.69 105.3,315.66 105.8,315.64 106.3,315.62 106.8,315.61 107.3,315.6 107.8,315.6 108.3,315.6 108.8,315.6 109.3,315.61 109.8,315.61 110.3,315.62 110.8,315.62 111.3,315.63 111.8,315.64 112.3,315.66 112.8,315.67 113.3,315.69 113.8,315.71 114.3,315.73 114.8,315.75 115.3,315.78 115.8,315.81 116.3,315.85 116.8,315.88 117.3,315.92 117.8,315.97 118.3,316.01 118.8,316.06 119.3,316.12 119.8,316.18 120,316.2 306.5,316.2" fill="none" stroke="#1367a8" stroke-width="1.4" stroke-linejoin="round"/>
<rect x="22.5" y="305.7" width="284" height="104.8" fill="none" stroke="#8e8e8e" stroke-width="0.9"/>
<line x1="50.9" y1="410.5" x2="50.9" y2="408" stroke="#8e8e8e" stroke-width="0.8"/>
<line x1="50.9" y1="305.7" x2="50.9" y2="308.2" stroke="#8e8e8e" stroke-width="0.8"/>
<line x1="79.3" y1="410.5" x2="79.3" y2="408" stroke="#8e8e8e" stroke-width="0.8"/>
<line x1="79.3" y1="305.7" x2="79.3" y2="308.2" stroke="#8e8e8e" stroke-width="0.8"/>
<line x1="107.7" y1="410.5" x2="107.7" y2="408" stroke="#8e8e8e" stroke-width="0.8"/>
<line x1="107.7" y1="305.7" x2="107.7" y2="308.2" stroke="#8e8e8e" stroke-width="0.8"/>
<line x1="136.1" y1="410.5" x2="136.1" y2="408" stroke="#8e8e8e" stroke-width="0.8"/>
<line x1="136.1" y1="305.7" x2="136.1" y2="308.2" stroke="#8e8e8e" stroke-width="0.8"/>
<line x1="164.5" y1="410.5" x2="164.5" y2="408" stroke="#8e8e8e" stroke-width="0.8"/>
<line x1="164.5" y1="305.7" x2="164.5" y2="308.2" stroke="#8e8e8e" stroke-width="0.8"/>
<line x1="192.9" y1="410.5" x2="192.9" y2="408" stroke="#8e8e8e" stroke-width="0.8"/>
<line x1="192.9" y1="305.7" x2="192.9" y2="308.2" stroke="#8e8e8e" stroke-width="0.8"/>
<line x1="221.3" y1="410.5" x2="221.3" y2="408" stroke="#8e8e8e" stroke-width="0.8"/>
<line x1="221.3" y1="305.7" x2="221.3" y2="308.2" stroke="#8e8e8e" stroke-width="0.8"/>
<line x1="249.7" y1="410.5" x2="249.7" y2="408" stroke="#8e8e8e" stroke-width="0.8"/>
<line x1="249.7" y1="305.7" x2="249.7" y2="308.2" stroke="#8e8e8e" stroke-width="0.8"/>
<line x1="278.1" y1="410.5" x2="278.1" y2="408" stroke="#8e8e8e" stroke-width="0.8"/>
<line x1="278.1" y1="305.7" x2="278.1" y2="308.2" stroke="#8e8e8e" stroke-width="0.8"/>
<line x1="22.5" y1="321.4" x2="25" y2="321.4" stroke="#8e8e8e" stroke-width="0.8"/>
<line x1="306.5" y1="321.4" x2="304" y2="321.4" stroke="#8e8e8e" stroke-width="0.8"/>
<text x="20.9" y="324.1" text-anchor="end" fill="#aaaaaa">6000</text>
<line x1="22.5" y1="347.8" x2="25" y2="347.8" stroke="#8e8e8e" stroke-width="0.8"/>
<line x1="306.5" y1="347.8" x2="304" y2="347.8" stroke="#8e8e8e" stroke-width="0.8"/>
<text x="20.9" y="350.5" text-anchor="end" fill="#aaaaaa">4000</text>
<line x1="22.5" y1="374.1" x2="25" y2="374.1" stroke="#8e8e8e" stroke-width="0.8"/>
<line x1="306.5" y1="374.1" x2="304" y2="374.1" stroke="#8e8e8e" stroke-width="0.8"/>
<text x="20.9" y="376.8" text-anchor="end" fill="#aaaaaa">2000</text>
<line x1="22.5" y1="400.4" x2="25" y2="400.4" stroke="#8e8e8e" stroke-width="0.8"/>
<line x1="306.5" y1="400.4" x2="304" y2="400.4" stroke="#8e8e8e" stroke-width="0.8"/>
<text x="20.9" y="403.1" text-anchor="end" fill="#aaaaaa">0</text>
<rect x="251.4" y="310.5" width="48.6" height="20.8" fill="#000" stroke="#b4b4b4" stroke-width="0.9"/>
<line x1="254.4" y1="316.15" x2="280.2" y2="316.15" stroke="#a9a214" stroke-width="1.4"/>
<text x="282.5" y="319.45" fill="#c4c4c4" font-size="7.25">Kfcx</text>
<line x1="254.4" y1="325.65" x2="280.2" y2="325.65" stroke="#1367a8" stroke-width="1.4"/>
<text x="282.5" y="328.95" fill="#c4c4c4" font-size="7.25">Kfcy</text>
<rect x="335.1" y="305.2" width="279.3" height="99.8" fill="#000"/>
<line x1="363.03" y1="305.2" x2="363.03" y2="405" stroke="#464646" stroke-width="0.8"/>
<line x1="390.96" y1="305.2" x2="390.96" y2="405" stroke="#464646" stroke-width="0.8"/>
<line x1="418.89" y1="305.2" x2="418.89" y2="405" stroke="#464646" stroke-width="0.8"/>
<line x1="446.82" y1="305.2" x2="446.82" y2="405" stroke="#464646" stroke-width="0.8"/>
<line x1="474.75" y1="305.2" x2="474.75" y2="405" stroke="#464646" stroke-width="0.8"/>
<line x1="502.68" y1="305.2" x2="502.68" y2="405" stroke="#464646" stroke-width="0.8"/>
<line x1="530.61" y1="305.2" x2="530.61" y2="405" stroke="#464646" stroke-width="0.8"/>
<line x1="558.54" y1="305.2" x2="558.54" y2="405" stroke="#464646" stroke-width="0.8"/>
<line x1="586.47" y1="305.2" x2="586.47" y2="405" stroke="#464646" stroke-width="0.8"/>
<line x1="335.1" y1="309.7" x2="614.4" y2="309.7" stroke="#464646" stroke-width="0.8"/>
<line x1="335.1" y1="331" x2="614.4" y2="331" stroke="#464646" stroke-width="0.8"/>
<line x1="335.1" y1="352.2" x2="614.4" y2="352.2" stroke="#464646" stroke-width="0.8"/>
<line x1="335.1" y1="373.4" x2="614.4" y2="373.4" stroke="#464646" stroke-width="0.8"/>
<line x1="335.1" y1="394.6" x2="614.4" y2="394.6" stroke="#464646" stroke-width="0.8"/>
<polyline points="390.96,394.5 397,394.1 444.8,387.6 614.4,367.6" fill="none" stroke="#a9a214" stroke-width="1.4" stroke-linejoin="round"/>
<polyline points="390.96,394.5 390.96,394.5 391.46,394.02 391.96,393.52 392.46,393 392.96,392.45 393.46,391.87 393.96,391.22 394.46,390.57 394.96,390.02 395.46,389.6 395.96,389.21 396.46,388.85 396.96,388.53 397.46,388.27 397.96,388.07 398.46,387.94 398.96,387.82 399.46,387.71 399.96,387.62 400.46,387.54 400.96,387.47 401.46,387.43 401.96,387.4 402.46,387.4 402.96,387.4 403.46,387.4 403.96,387.4 404.46,387.4 404.96,387.4 405.46,387.41 405.96,387.41 406.46,387.42 406.96,387.42 407.46,387.43 407.96,387.44 408.46,387.45 408.96,387.47 409.46,387.48 409.96,387.5 410,387.5 614.4,387.5" fill="none" stroke="#1367a8" stroke-width="1.4" stroke-linejoin="round"/>
<polyline points="335.1,394.5 390.76,394.5 390.96,315.2 390.96,315.2 391.46,319.49 391.96,323.92 392.46,328.48 392.96,333.17 393.46,338.08 393.96,343.35 394.46,348.63 394.96,353.54 395.46,357.9 395.96,362.01 396.46,365.85 396.96,369.41 397.46,372.67 397.96,375.74 398.46,378.59 398.96,381.12 399.46,383.31 399.96,385.34 400.46,387.16 400.96,388.64 401.46,389.74 401.96,390.69 402.46,391.53 402.96,392.26 403.46,392.89 403.96,393.41 404.46,393.82 404.96,394.19 405.46,394.51 405.96,394.8 406.46,395.03 406.96,395.21 407.46,395.33 407.96,395.43 408.46,395.52 408.96,395.6 409.46,395.65 409.96,395.69 410.46,395.7 410.96,395.69 411.46,395.66 411.96,395.62 412.46,395.56 412.96,395.5 413.46,395.43 413.96,395.35 414.46,395.28 414.96,395.2 415.46,395.12 415.96,395.05 416.46,394.99 416.96,394.94 417.46,394.9 417.96,394.86 418.46,394.82 418.96,394.79 419.46,394.76 419.96,394.72 420.46,394.69 420.96,394.66 421.46,394.64 421.96,394.61 422.46,394.59 422.96,394.56 423.46,394.54 423.96,394.53 424.46,394.51 424.96,394.5 425,394.5 614.4,394.5" fill="none" stroke="#b3531f" stroke-width="1.4" stroke-linejoin="round"/>
<rect x="335.1" y="305.2" width="279.3" height="99.8" fill="none" stroke="#8e8e8e" stroke-width="0.9"/>
<line x1="363.03" y1="405" x2="363.03" y2="402.5" stroke="#8e8e8e" stroke-width="0.8"/>
<line x1="363.03" y1="305.2" x2="363.03" y2="307.7" stroke="#8e8e8e" stroke-width="0.8"/>
<line x1="390.96" y1="405" x2="390.96" y2="402.5" stroke="#8e8e8e" stroke-width="0.8"/>
<line x1="390.96" y1="305.2" x2="390.96" y2="307.7" stroke="#8e8e8e" stroke-width="0.8"/>
<line x1="418.89" y1="405" x2="418.89" y2="402.5" stroke="#8e8e8e" stroke-width="0.8"/>
<line x1="418.89" y1="305.2" x2="418.89" y2="307.7" stroke="#8e8e8e" stroke-width="0.8"/>
<line x1="446.82" y1="405" x2="446.82" y2="402.5" stroke="#8e8e8e" stroke-width="0.8"/>
<line x1="446.82" y1="305.2" x2="446.82" y2="307.7" stroke="#8e8e8e" stroke-width="0.8"/>
<line x1="474.75" y1="405" x2="474.75" y2="402.5" stroke="#8e8e8e" stroke-width="0.8"/>
<line x1="474.75" y1="305.2" x2="474.75" y2="307.7" stroke="#8e8e8e" stroke-width="0.8"/>
<line x1="502.68" y1="405" x2="502.68" y2="402.5" stroke="#8e8e8e" stroke-width="0.8"/>
<line x1="502.68" y1="305.2" x2="502.68" y2="307.7" stroke="#8e8e8e" stroke-width="0.8"/>
<line x1="530.61" y1="405" x2="530.61" y2="402.5" stroke="#8e8e8e" stroke-width="0.8"/>
<line x1="530.61" y1="305.2" x2="530.61" y2="307.7" stroke="#8e8e8e" stroke-width="0.8"/>
<line x1="558.54" y1="405" x2="558.54" y2="402.5" stroke="#8e8e8e" stroke-width="0.8"/>
<line x1="558.54" y1="305.2" x2="558.54" y2="307.7" stroke="#8e8e8e" stroke-width="0.8"/>
<line x1="586.47" y1="405" x2="586.47" y2="402.5" stroke="#8e8e8e" stroke-width="0.8"/>
<line x1="586.47" y1="305.2" x2="586.47" y2="307.7" stroke="#8e8e8e" stroke-width="0.8"/>
<line x1="335.1" y1="309.7" x2="337.6" y2="309.7" stroke="#8e8e8e" stroke-width="0.8"/>
<line x1="614.4" y1="309.7" x2="611.9" y2="309.7" stroke="#8e8e8e" stroke-width="0.8"/>
<text x="333.5" y="312.4" text-anchor="end" fill="#aaaaaa">2</text>
<line x1="335.1" y1="331" x2="337.6" y2="331" stroke="#8e8e8e" stroke-width="0.8"/>
<line x1="614.4" y1="331" x2="611.9" y2="331" stroke="#8e8e8e" stroke-width="0.8"/>
<text x="333.5" y="333.7" text-anchor="end" fill="#aaaaaa">1.5</text>
<line x1="335.1" y1="352.2" x2="337.6" y2="352.2" stroke="#8e8e8e" stroke-width="0.8"/>
<line x1="614.4" y1="352.2" x2="611.9" y2="352.2" stroke="#8e8e8e" stroke-width="0.8"/>
<text x="333.5" y="354.9" text-anchor="end" fill="#aaaaaa">1</text>
<line x1="335.1" y1="373.4" x2="337.6" y2="373.4" stroke="#8e8e8e" stroke-width="0.8"/>
<line x1="614.4" y1="373.4" x2="611.9" y2="373.4" stroke="#8e8e8e" stroke-width="0.8"/>
<text x="333.5" y="376.1" text-anchor="end" fill="#aaaaaa">0.5</text>
<line x1="335.1" y1="394.6" x2="337.6" y2="394.6" stroke="#8e8e8e" stroke-width="0.8"/>
<line x1="614.4" y1="394.6" x2="611.9" y2="394.6" stroke="#8e8e8e" stroke-width="0.8"/>
<text x="333.5" y="397.3" text-anchor="end" fill="#aaaaaa">0</text>
<text x="335.1" y="414.5" text-anchor="middle" fill="#aaaaaa">0</text>
<text x="363.03" y="414.5" text-anchor="middle" fill="#aaaaaa">0.5</text>
<text x="390.96" y="414.5" text-anchor="middle" fill="#aaaaaa">1</text>
<text x="418.89" y="414.5" text-anchor="middle" fill="#aaaaaa">1.5</text>
<text x="446.82" y="414.5" text-anchor="middle" fill="#aaaaaa">2</text>
<text x="474.75" y="414.5" text-anchor="middle" fill="#aaaaaa">2.5</text>
<text x="502.68" y="414.5" text-anchor="middle" fill="#aaaaaa">3</text>
<text x="530.61" y="414.5" text-anchor="middle" fill="#aaaaaa">3.5</text>
<text x="558.54" y="414.5" text-anchor="middle" fill="#aaaaaa">4</text>
<text x="586.47" y="414.5" text-anchor="middle" fill="#aaaaaa">4.5</text>
<text x="614.4" y="414.5" text-anchor="middle" fill="#aaaaaa">5</text>
<rect x="551.2" y="309.7" width="56.6" height="31" fill="#000" stroke="#b4b4b4" stroke-width="0.9"/>
<line x1="554.2" y1="315.7" x2="580.2" y2="315.7" stroke="#a9a214" stroke-width="1.4"/>
<text x="582.5" y="319" fill="#c4c4c4" font-size="7.25">Kpsi</text>
<line x1="554.2" y1="325.2" x2="580.2" y2="325.2" stroke="#1367a8" stroke-width="1.4"/>
<text x="582.5" y="328.5" fill="#c4c4c4" font-size="7.25">Kpsip</text>
<line x1="554.2" y1="334.7" x2="580.2" y2="334.7" stroke="#b3531f" stroke-width="1.4"/>
<text x="582.5" y="338" fill="#c4c4c4" font-size="7.25">Kpsipp</text>
<rect x="22.5" y="424.6" width="284" height="99.2" fill="#000"/>
<line x1="50.9" y1="424.6" x2="50.9" y2="523.8" stroke="#464646" stroke-width="0.8"/>
<line x1="79.3" y1="424.6" x2="79.3" y2="523.8" stroke="#464646" stroke-width="0.8"/>
<line x1="107.7" y1="424.6" x2="107.7" y2="523.8" stroke="#464646" stroke-width="0.8"/>
<line x1="136.1" y1="424.6" x2="136.1" y2="523.8" stroke="#464646" stroke-width="0.8"/>
<line x1="164.5" y1="424.6" x2="164.5" y2="523.8" stroke="#464646" stroke-width="0.8"/>
<line x1="192.9" y1="424.6" x2="192.9" y2="523.8" stroke="#464646" stroke-width="0.8"/>
<line x1="221.3" y1="424.6" x2="221.3" y2="523.8" stroke="#464646" stroke-width="0.8"/>
<line x1="249.7" y1="424.6" x2="249.7" y2="523.8" stroke="#464646" stroke-width="0.8"/>
<line x1="278.1" y1="424.6" x2="278.1" y2="523.8" stroke="#464646" stroke-width="0.8"/>
<line x1="22.5" y1="440.4" x2="306.5" y2="440.4" stroke="#464646" stroke-width="0.8"/>
<line x1="22.5" y1="464.9" x2="306.5" y2="464.9" stroke="#464646" stroke-width="0.8"/>
<line x1="22.5" y1="489.4" x2="306.5" y2="489.4" stroke="#464646" stroke-width="0.8"/>
<line x1="22.5" y1="513.9" x2="306.5" y2="513.9" stroke="#464646" stroke-width="0.8"/>
<polyline points="79.3,513.7 79.3,461.6 79.3,461.6 79.8,463.97 80.3,465.88 80.8,467.27 81.3,468.09 81.8,468.29 82.3,467.95 82.8,467.3 83.3,466.54 83.8,465.46 84.3,464.01 84.8,462.33 85.3,460.55 85.8,458.79 86.3,457.19 86.8,455.62 87.3,454.02 87.8,452.42 88.3,450.88 88.8,449.45 89.3,448.15 89.8,446.94 90.3,445.77 90.8,444.66 91.3,443.64 91.8,442.71 92.3,441.9 92.8,441.16 93.3,440.47 93.8,439.81 94.3,439.2 94.8,438.64 95.3,438.13 95.8,437.68 96.3,437.3 96.8,436.95 97.3,436.62 97.8,436.29 98.3,435.99 98.8,435.71 99.3,435.45 99.8,435.23 100.3,435.05 100.8,434.91 101.3,434.81 101.8,434.75 102.3,434.7 102.8,434.65 103.3,434.6 103.8,434.56 104.3,434.52 104.8,434.49 105.3,434.46 105.8,434.44 106.3,434.42 106.8,434.41 107.3,434.4 107.8,434.4 108.3,434.4 108.8,434.4 109.3,434.41 109.8,434.41 110.3,434.42 110.8,434.42 111.3,434.43 111.8,434.44 112.3,434.46 112.8,434.47 113.3,434.49 113.8,434.51 114.3,434.53 114.8,434.55 115.3,434.58 115.8,434.61 116.3,434.65 116.8,434.68 117.3,434.72 117.8,434.77 118.3,434.81 118.8,434.86 119.3,434.92 119.8,434.98 120,435 306.5,435" fill="none" stroke="#a9a214" stroke-width="1.4" stroke-linejoin="round"/>
<polyline points="22.5,513.7 79.3,513.7 79.9,512.5 87.3,512.9 306.5,512.9" fill="none" stroke="#1367a8" stroke-width="1.4" stroke-linejoin="round"/>
<rect x="22.5" y="424.6" width="284" height="99.2" fill="none" stroke="#8e8e8e" stroke-width="0.9"/>
<line x1="50.9" y1="523.8" x2="50.9" y2="521.3" stroke="#8e8e8e" stroke-width="0.8"/>
<line x1="50.9" y1="424.6" x2="50.9" y2="427.1" stroke="#8e8e8e" stroke-width="0.8"/>
<line x1="79.3" y1="523.8" x2="79.3" y2="521.3" stroke="#8e8e8e" stroke-width="0.8"/>
<line x1="79.3" y1="424.6" x2="79.3" y2="427.1" stroke="#8e8e8e" stroke-width="0.8"/>
<line x1="107.7" y1="523.8" x2="107.7" y2="521.3" stroke="#8e8e8e" stroke-width="0.8"/>
<line x1="107.7" y1="424.6" x2="107.7" y2="427.1" stroke="#8e8e8e" stroke-width="0.8"/>
<line x1="136.1" y1="523.8" x2="136.1" y2="521.3" stroke="#8e8e8e" stroke-width="0.8"/>
<line x1="136.1" y1="424.6" x2="136.1" y2="427.1" stroke="#8e8e8e" stroke-width="0.8"/>
<line x1="164.5" y1="523.8" x2="164.5" y2="521.3" stroke="#8e8e8e" stroke-width="0.8"/>
<line x1="164.5" y1="424.6" x2="164.5" y2="427.1" stroke="#8e8e8e" stroke-width="0.8"/>
<line x1="192.9" y1="523.8" x2="192.9" y2="521.3" stroke="#8e8e8e" stroke-width="0.8"/>
<line x1="192.9" y1="424.6" x2="192.9" y2="427.1" stroke="#8e8e8e" stroke-width="0.8"/>
<line x1="221.3" y1="523.8" x2="221.3" y2="521.3" stroke="#8e8e8e" stroke-width="0.8"/>
<line x1="221.3" y1="424.6" x2="221.3" y2="427.1" stroke="#8e8e8e" stroke-width="0.8"/>
<line x1="249.7" y1="523.8" x2="249.7" y2="521.3" stroke="#8e8e8e" stroke-width="0.8"/>
<line x1="249.7" y1="424.6" x2="249.7" y2="427.1" stroke="#8e8e8e" stroke-width="0.8"/>
<line x1="278.1" y1="523.8" x2="278.1" y2="521.3" stroke="#8e8e8e" stroke-width="0.8"/>
<line x1="278.1" y1="424.6" x2="278.1" y2="427.1" stroke="#8e8e8e" stroke-width="0.8"/>
<line x1="22.5" y1="440.4" x2="25" y2="440.4" stroke="#8e8e8e" stroke-width="0.8"/>
<line x1="306.5" y1="440.4" x2="304" y2="440.4" stroke="#8e8e8e" stroke-width="0.8"/>
<text x="20.9" y="443.1" text-anchor="end" fill="#aaaaaa">3</text>
<line x1="22.5" y1="464.9" x2="25" y2="464.9" stroke="#8e8e8e" stroke-width="0.8"/>
<line x1="306.5" y1="464.9" x2="304" y2="464.9" stroke="#8e8e8e" stroke-width="0.8"/>
<text x="20.9" y="467.6" text-anchor="end" fill="#aaaaaa">2</text>
<line x1="22.5" y1="489.4" x2="25" y2="489.4" stroke="#8e8e8e" stroke-width="0.8"/>
<line x1="306.5" y1="489.4" x2="304" y2="489.4" stroke="#8e8e8e" stroke-width="0.8"/>
<text x="20.9" y="492.1" text-anchor="end" fill="#aaaaaa">1</text>
<line x1="22.5" y1="513.9" x2="25" y2="513.9" stroke="#8e8e8e" stroke-width="0.8"/>
<line x1="306.5" y1="513.9" x2="304" y2="513.9" stroke="#8e8e8e" stroke-width="0.8"/>
<text x="20.9" y="516.6" text-anchor="end" fill="#aaaaaa">0</text>
<text x="22.5" y="533.3" text-anchor="middle" fill="#aaaaaa">0</text>
<text x="50.9" y="533.3" text-anchor="middle" fill="#aaaaaa">0.5</text>
<text x="79.3" y="533.3" text-anchor="middle" fill="#aaaaaa">1</text>
<text x="107.7" y="533.3" text-anchor="middle" fill="#aaaaaa">1.5</text>
<text x="136.1" y="533.3" text-anchor="middle" fill="#aaaaaa">2</text>
<text x="164.5" y="533.3" text-anchor="middle" fill="#aaaaaa">2.5</text>
<text x="192.9" y="533.3" text-anchor="middle" fill="#aaaaaa">3</text>
<text x="221.3" y="533.3" text-anchor="middle" fill="#aaaaaa">3.5</text>
<text x="249.7" y="533.3" text-anchor="middle" fill="#aaaaaa">4</text>
<text x="278.1" y="533.3" text-anchor="middle" fill="#aaaaaa">4.5</text>
<text x="306.5" y="533.3" text-anchor="middle" fill="#aaaaaa">5</text>
<rect x="249.3" y="429.5" width="50.7" height="21" fill="#000" stroke="#b4b4b4" stroke-width="0.9"/>
<line x1="252.3" y1="435.25" x2="278.2" y2="435.25" stroke="#a9a214" stroke-width="1.4"/>
<text x="280.5" y="438.55" fill="#c4c4c4" font-size="7.25">Kacy</text>
<line x1="252.3" y1="444.75" x2="278.2" y2="444.75" stroke="#1367a8" stroke-width="1.4"/>
<text x="280.5" y="448.05" fill="#c4c4c4" font-size="7.25">Kacy</text>
<rect x="312.4" y="417.6" width="308.8" height="118.6" fill="#282828" stroke="#a4a4a4" stroke-width="0.9"/>
<rect x="614.5" y="61.9" width="8.3" height="5.6" fill="#2e2e2e" stroke="#a8a8a8" stroke-width="0.9"/><path d="M616.9 66.2L618.65 62.9L620.4 66.2Z" fill="#f0f0f0"/><rect x="615.6" y="64" width="1.3" height="2" fill="#1a1a1a"/><rect x="620.5" y="64" width="1.3" height="2" fill="#1a1a1a"/>
</svg>

<svg class="ui" width="630" height="563" viewBox="0 0 630 563">
<defs>
<radialGradient id="gp" cx="0.5" cy="0.4" r="0.6"><stop offset="0" stop-color="#eefbd0"/><stop offset="0.6" stop-color="#c2e884"/><stop offset="1" stop-color="#6fb02a"/></radialGradient>
<linearGradient id="gf" x1="0" y1="0" x2="1" y2="0"><stop offset="0" stop-color="#cfcfcf"/><stop offset="0.5" stop-color="#ffffff"/><stop offset="1" stop-color="#cfcfcf"/></linearGradient>
</defs>
<!-- title icon -->
<rect x="10.1" y="10.1" width="10.2" height="10.3" rx="0.8" fill="#f6f7f9" stroke="#c2c6ce" stroke-width="0.8"/>
<rect x="10.1" y="19.4" width="10.2" height="1" fill="#d4d7dc"/>
<rect x="10.1" y="10.1" width="10.2" height="1.7" fill="#92aecb"/>
<path d="M11.2 16.1 L14.3 14.2 L15.4 15.4 L13.5 17.9 Z" fill="#4a86c8"/>
<path d="M13.5 17.9 L15.4 15.4 L16.5 12.6 L16.1 17.4 L14.6 19.3 Z" fill="#8a2a14"/>
<path d="M16.5 12.6 C17.3 14.4 18 17 19.4 18.2 C18.2 17.9 17.6 18.5 17 19.3 C16.3 18.5 15.6 18.2 14.6 19.3 C15.5 17.5 16 15 16.5 12.6 Z" fill="#ee7a1c"/>
<!-- window controls -->
<path d="M544.2 15.8H550.8" stroke="#222" stroke-width="0.8"/>
<rect x="574.2" y="12.3" width="6.6" height="6.5" fill="none" stroke="#222" stroke-width="0.8"/>
<path d="M604.6 12L611.6 18.7M611.6 12L604.6 18.7" stroke="#222" stroke-width="0.85"/>
<!-- menu corner arrow -->
<path d="M617 32.2L620.8 35.6M621 32.6V35.8H617.9" stroke="#222" stroke-width="0.9" fill="none"/>
<path d="M621.3 33V36H618.2Z" fill="#222"/>
<!-- toolbar: gear -->
<circle cx="12.6" cy="50.6" r="4.5" fill="#b9b9b9" stroke="#a6a6a6" stroke-width="0.7"/>
<circle cx="12.6" cy="50.6" r="2.1" fill="#ffffff" stroke="#6c6c6c" stroke-width="1.4"/>
<g fill="#383838">
<path d="M22.3 49.6h2.8l-1.4 1.7z"/>
<path d="M112.9 49.6h2.8l-1.4 1.7z"/>
<path d="M139.6 49.6h2.8l-1.4 1.7z"/>
<path d="M166.2 49.6h2.8l-1.4 1.7z"/>
<path d="M207.4 49.6h2.8l-1.4 1.7z"/>
</g>
<g stroke="#cdcdcd" stroke-width="0.9">
<path d="M28.6 44.3V57.6M92.7 44.3V57.6M119.6 44.3V57.6M145.8 44.3V57.6M172.5 44.3V57.6"/>
</g>
<!-- step back -->
<path d="M34.3 49.2L41.6 45.6L43 46.2V52.2L41.6 52.6Z" fill="#8fbce6" stroke="#5f98d2" stroke-width="0.6" stroke-linejoin="round"/>
<circle cx="40.8" cy="51.8" r="2.9" fill="#a9a9a9" stroke="#777" stroke-width="0.7"/>
<circle cx="40.8" cy="51.8" r="1.1" fill="#ececec" stroke="#666" stroke-width="0.5"/>
<!-- play -->
<circle cx="53.6" cy="50.3" r="5.1" fill="url(#gp)" stroke="#63a524" stroke-width="1"/>
<path d="M52 47.9L56.2 50.3L52 52.7Z" fill="#26361a"/>
<!-- step fwd -->
<rect x="64.5" y="46.3" width="1.6" height="8" fill="#6a9fd6" stroke="#4a86c6" stroke-width="0.4"/>
<path d="M67.1 46.4L72.9 50.3L67.1 54.2Z" fill="#a9cdf0" stroke="#4f8fd2" stroke-width="0.8" stroke-linejoin="round"/>
<!-- stop -->
<rect x="78.2" y="44.9" width="10.4" height="10.4" rx="2.8" fill="#bababa" stroke="#b0b0b0" stroke-width="0.6"/>
<rect x="81.3" y="48" width="4.2" height="4.2" rx="0.6" fill="#9d9d9d"/>
<!-- flow icon -->
<rect x="98.1" y="46" width="5.6" height="3.2" rx="1.2" fill="#f6a648" stroke="#f0962c" stroke-width="0.8"/>
<rect x="99.8" y="47" width="2.3" height="1.2" rx="0.5" fill="#fff3e0"/>
<rect x="98.2" y="52.4" width="5.2" height="2.9" rx="1.1" fill="#fff" stroke="#777" stroke-width="0.9"/>
<path d="M103.6 53.8C105 53.6 105.6 52.6 105.7 51.4" stroke="#777" stroke-width="0.9" fill="none"/>
<path d="M104.2 48.4L108 51.2L105.6 51.6L104.6 53.6Z" fill="#f4f4f4" stroke="#777" stroke-width="0.6"/>
<path d="M104.4 47.6l1.4-1.4" stroke="#d9694a" stroke-width="0.8"/>
<!-- zoom -->
<circle cx="128.8" cy="49.4" r="3.3" fill="#f2f6fa" stroke="#8a8a8a" stroke-width="1.1"/>
<path d="M127.1 49.4h3.4M128.8 47.7v3.4" stroke="#54627a" stroke-width="0.9"/>
<path d="M131.4 52L134.2 54.9" stroke="#2d2d2d" stroke-width="1.9" stroke-linecap="round"/>
<!-- fit -->
<rect x="151.4" y="45.9" width="10.2" height="10.2" fill="url(#gf)" stroke="#8f8f8f" stroke-width="0.9"/>
<path d="M154.9 47L156.5 48.9L158.1 47ZM154.9 55L156.5 53.1L158.1 55Z" fill="#2c2c2c"/>

<!-- trigger -->
<path d="M177.8 54H182.4V46.2H186.6" stroke="#2a2a2a" stroke-width="1.7" fill="none"/>
<path d="M179.2 51.6L182.4 47.4L185.6 51.6Z" fill="#2a2a2a"/>
<!-- ruler -->
<rect x="192.3" y="45.7" width="10.6" height="10.2" fill="#fbfbfb" stroke="#9a9a9a" stroke-width="0.9"/>
<path d="M195.2 53.6L200.6 47.8" stroke="#7fb0da" stroke-width="2.7" stroke-linecap="round"/>
<path d="M195.2 53.6L200.6 47.8" stroke="#b4d4ec" stroke-width="1.3" stroke-linecap="round"/>

</svg>
</body>
</html>
